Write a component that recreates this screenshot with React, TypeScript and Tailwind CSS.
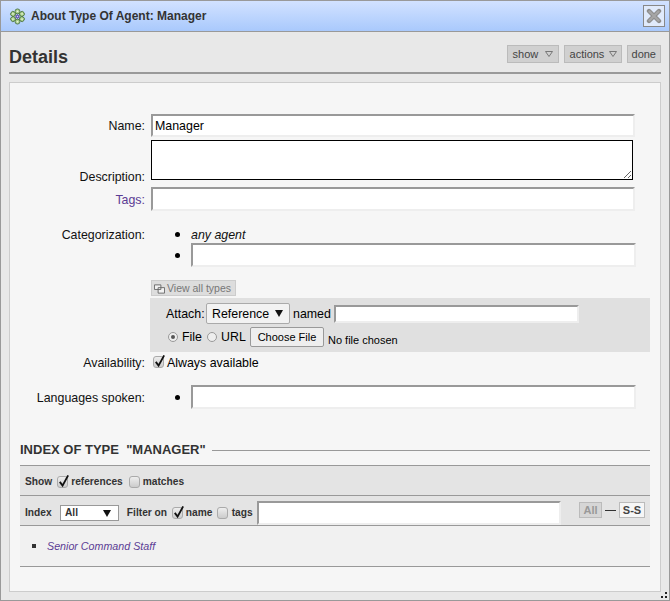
const FONT = "font-['Liberation_Sans',Arial,sans-serif]";
const field =
  "block bg-white border-2 border-t-[#999] border-l-[#999] border-r-[#eee] border-b-[#eee] outline-none";

function Check({ on = false }: { on?: boolean }) {
  return (
    <span className="relative inline-block w-[11px] h-[12px] rounded-[3px] border border-[#aaa] bg-gradient-to-b from-[#eee] to-[#ccc] shrink-0">
      {on && (
        <svg viewBox="0 0 14 14" className="absolute left-[-1px] top-[-3px] w-[13px] h-[14px]">
          <path d="M3 8l3 4 6-11" fill="none" stroke="#111" strokeWidth="2" />
        </svg>
      )}
    </span>
  );
}

function Radio({ on = false }: { on?: boolean }) {
  return (
    <span className="inline-flex items-center justify-center w-[10px] h-[10px] rounded-full border border-[#999] bg-[#eee] shrink-0">
      {on && <span className="w-[4px] h-[4px] rounded-full bg-[#555]" />}
    </span>
  );
}

function Caret({ className = "" }: { className?: string }) {
  return (
    <svg viewBox="0 0 8 6" className={`w-[8px] h-[6px] ${className}`}>
      <path d="M.5.5h7L4 5.5z" fill="none" stroke="#777" strokeWidth="1" />
    </svg>
  );
}

function Down() {
  return (
    <svg viewBox="0 0 8 7" className="w-[8px] h-[7px]">
      <path d="M0 0h8L4 7z" fill="#111" />
    </svg>
  );
}

function Logo() {
  const spots = [0, 60, 120, 180, 240, 300];
  return (
    <svg viewBox="0 0 20 20" className="w-[17px] h-[17px] shrink-0">
      {spots.map((a) => (
        <g key={a} transform={`rotate(${a} 10 10)`}>
          <line x1="10" y1="10" x2="10" y2="3" stroke="#7c8f7a" strokeWidth="1" />
          <circle cx="10" cy="4" r="2.9" fill="#a9cf8b" stroke="#48703e" strokeWidth="1" />
          <circle cx="10" cy="3.8" r="1" fill="#eef6e4" />
        </g>
      ))}
      <circle cx="10" cy="10" r="2.4" fill="#6a5fb5" />
      <circle cx="10" cy="10" r="0.8" fill="#d9d4f2" />
    </svg>
  );
}

function Label({ children, tag = false, className = "pt-[2px]" }: { children: string; tag?: boolean; className?: string }) {
  return (
    <span className={`w-[135px] shrink-0 text-right ${tag ? "text-[#5b3c94]" : "text-[#111]"} ${className}`}>
      {children}
    </span>
  );
}

function Bullet() {
  return (
    <span className="ml-[30px] mr-[11px] w-[5px] h-[5px] rounded-full bg-black shrink-0" />
  );
}

function HeadButton({ children, caret = false, className = "" }: { children: string; caret?: boolean; className?: string }) {
  return (
    <span
      className={`flex items-center justify-between h-[18px] bg-[#d0d0d0] border border-[#bbb] text-[#444] text-[11px] ${className}`}
    >
      {children}
      {caret && <Caret />}
    </span>
  );
}

export default function App() {
  return (
    <div className={`w-[670px] h-[601px] flex flex-col border border-[#999] bg-[#e8e8e8] text-[12px] ${FONT}`}>
      {/* title bar */}
      <div className="h-[31px] shrink-0 flex items-center pl-[8px] pr-[4px] bg-gradient-to-b from-[#d2e2ff] to-[#a9c9fc] border-b border-[#999]">
        <Logo />
        <span className="ml-[5px] text-[12px] font-bold text-[#333]">About Type Of Agent: Manager</span>
        <span className="ml-auto w-[22px] h-[22px] flex items-center justify-center border border-[#888] bg-[#e0eafb]">
          <svg viewBox="0 0 16 16" className="w-[16px] h-[16px]">
            <path d="M3 3l10 10M13 3L3 13" stroke="#8c8c8c" strokeWidth="4.4" strokeLinecap="round" />
            <path d="M3.5 3.5l9 9M12.5 3.5l-9 9" stroke="#a6a6a6" strokeWidth="2.4" strokeLinecap="round" />
          </svg>
        </span>
      </div>

      <div className="flex-1 px-[8px] flex flex-col">
        {/* heading */}
        <div className="h-[42px] flex items-center border-b-2 border-[#999] shrink-0 text-[#333]">
          <span className="text-[18px] font-bold mt-[10px]">Details</span>
          <div className="ml-auto flex gap-[5px] mt-[4px]">
            <HeadButton caret className="w-[52px] pl-[5px] pr-[5px]">show</HeadButton>
            <HeadButton caret className="w-[58px] pl-[5px] pr-[4px]">actions</HeadButton>
            <HeadButton className="px-[4px]">done</HeadButton>
          </div>
        </div>

        {/* panel */}
        <div className="mt-[8px] h-[510px] border border-[#ccc] bg-[#f6f6f6] text-[12.4px] flex flex-col">
          <div className="pt-[31px] flex flex-col">
            <div className="flex items-center h-[23px]">
              <Label>Name:</Label>
              <input defaultValue="Manager" className={`${field} ml-[6px] w-[484px] h-[23px] px-[2px] text-[12.4px] text-black`} />
            </div>
            <div className="flex items-end h-[40px] mt-[3px]">
              <Label className="mb-[-7px]">Description:</Label>
              <textarea className="block ml-[6px] w-[482px] h-[40px] bg-white border border-black resize-y outline-none" />
            </div>
            <div className="flex items-center h-[24px] mt-[7px]">
              <Label tag>Tags:</Label>
              <input className={`${field} ml-[6px] w-[484px] h-[24px]`} />
            </div>
            <div className="flex items-center h-[16px] mt-[15px]">
              <Label>Categorization:</Label>
              <Bullet />
              <span className="italic text-[#111] pt-[2px]">any agent</span>
            </div>
            <div className="flex items-center h-[24px] mt-[1px]">
              <span className="w-[135px] shrink-0" />
              <Bullet />
              <input className={`${field} w-[445px] h-[24px]`} />
            </div>

            <span className="ml-[141px] mt-[13px] w-[85px] h-[16px] flex items-center bg-[#ddd] border border-[#ccc] text-[#777] text-[10.5px] pl-[2px] pt-[1px]">
              <svg viewBox="0 0 12 10" className="w-[11px] h-[10px] mr-[2px]">
                <path d="M.5.5h7v5h-7zM4.5 3.5h7v6h-7z" fill="#f2f2f2" stroke="#666" />
              </svg>
              View all types
            </span>

            {/* attach box */}
            <div className="ml-[140px] mt-[2px] w-[500px] h-[54px] bg-[#e0e0e0] pl-[16px] flex flex-col">
              <div className="flex items-center h-[21px] mt-[5px]">
                <span className="w-[40px] pt-[2px]">Attach:</span>
                <span className="w-[84px] h-[21px] flex items-center justify-between pl-[5px] pr-[6px] rounded-[2px] border border-[#aaa] bg-[#f2f2f2]">
                  <span className="pt-[1px]">Reference</span>
                  <Down />
                </span>
                <span className="ml-[3px] w-[41px] pt-[2px]">named</span>
                <input className={`${field} w-[245px] h-[18px]`} />
              </div>
              <div className="flex items-center h-[20px] mt-[3px]">
                <span className="ml-[2px] flex"><Radio on /></span>
                <span className="ml-[4px] w-[25px]">File</span>
                <Radio />
                <span className="ml-[4px] w-[29px]">URL</span>
                <span className="w-[74px] h-[20px] flex items-center justify-center rounded-[2px] border border-[#999] bg-[#eee] text-[11px]">
                  Choose File
                </span>
                <span className="ml-[4px] mt-[6px] text-[11px]">No file chosen</span>
              </div>
            </div>

            <div className="flex items-center h-[16px] mt-[2px]">
              <Label>Availability:</Label>
              <span className="ml-[8px] flex"><Check on /></span>
              <span className="ml-[3px] pt-[2px]">Always available</span>
            </div>
            <div className="flex items-center h-[24px] mt-[15px]">
              <Label>Languages spoken:</Label>
              <Bullet />
              <input className={`${field} w-[445px] h-[24px]`} />
            </div>
          </div>

          {/* index */}
          <div className="mx-[10px] mt-[33px] flex flex-col">
            <div className="flex items-center h-[16px]">
              <span className="text-[13px] font-bold text-[#333] whitespace-pre">INDEX OF TYPE  "MANAGER"</span>
              <span className="ml-[6px] flex-1 h-px bg-[#999]" />
            </div>
            <div className="mt-[7px] h-[31px] flex items-center px-[5px] pt-[2px] bg-[#e4e4e4] border-y border-[#999] text-[10.2px] font-bold text-[#333]">
              Show
              <span className="ml-[5px] flex"><Check on /></span>
              <span className="ml-[3px]">references</span>
              <span className="ml-[6px] flex"><Check /></span>
              <span className="ml-[3px]">matches</span>
            </div>
            <div className="h-[30px] flex items-center px-[5px] pt-[5px] bg-[#e4e4e4] border-b border-[#999] text-[10.2px] font-bold text-[#333]">
              <span className="w-[35px]">Index</span>
              <span className="w-[59px] h-[16px] flex items-center justify-between pl-[4px] pr-[7px] bg-white border border-[#999]">
                All
                <Down />
              </span>
              <span className="ml-[8px] w-[45px]">Filter on</span>
              <span className="flex"><Check on /></span>
              <span className="ml-[3px] w-[31px]">name</span>
              <span className="flex"><Check /></span>
              <span className="ml-[4px] w-[25px]">tags</span>
              <input className={`${field} w-[305px] h-[24px]`} />
              <span className="ml-[18px] mb-[6px] w-[23px] h-[16px] flex items-center justify-center bg-[#d6d6d6] border border-[#bbb] text-[#999] text-[11px]">All</span>
              <span className="mx-[3px] mb-[6px] w-[11px] h-px bg-[#333]" />
              <span className="mb-[6px] w-[26px] h-[16px] flex items-center justify-center bg-[#f6f6f6] border border-[#bbb] text-[#444] text-[11px]">S-S</span>
            </div>
            <div className="h-[41px] flex items-center pl-[12px] bg-[#f1f1f1] border-b border-[#999]">
              <span className="w-[4px] h-[4px] bg-[#333]" />
              <span className="ml-[11px] text-[10.7px] italic text-[#5b3c94]">Senior Command Staff</span>
            </div>
          </div>
        </div>

        <div className="flex justify-end mt-auto mb-[2px] mr-[-6px]">
          <svg viewBox="0 0 6 6" className="w-[6px] h-[6px]">
            <path d="M4 0h2v2H4zM0 4h2v2H0zM4 4h2v2H4z" fill="#222" />
          </svg>
        </div>
      </div>
    </div>
  );
}
